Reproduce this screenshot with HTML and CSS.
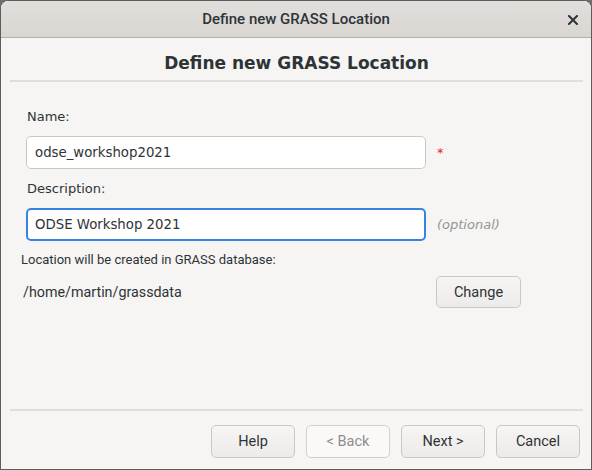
FILE: index.html
```html
<!DOCTYPE html>
<html>
<head>
<meta charset="utf-8">
<link rel="stylesheet" href="styles.css">
</head>
<body>
<div class="window">
  <div class="titlebar">
    <span class="title">Define new GRASS Location</span>
    <span class="close">
      <svg width="10" height="10" viewBox="0 0 10 10"><path d="M1 1L9 9M9 1L1 9" stroke="#2e3436" stroke-width="2" stroke-linecap="square"/></svg>
    </span>
  </div>
  <div class="content">
    <h1 class="heading">Define new GRASS Location</h1>
    <div class="sep"></div>
    <div class="form">
      <div class="label">Name:</div>
      <div class="row">
        <div class="input">odse_workshop2021</div>
        <span class="required">*</span>
      </div>
      <div class="label label2">Description:</div>
      <div class="row">
        <div class="input focused">ODSE Workshop 2021</div>
        <span class="optional">(optional)</span>
      </div>
      <div class="dbinfo">Location will be created in GRASS database:</div>
      <div class="dbrow">
        <span class="dbpath">/home/martin/grassdata</span>
        <button class="btn change">Change</button>
      </div>
    </div>
    <div class="sep bottom"></div>
    <div class="buttons">
      <button class="btn">Help</button>
      <button class="btn disabled">&lt; Back</button>
      <button class="btn">Next &gt;</button>
      <button class="btn">Cancel</button>
    </div>
  </div>
</div>
</body>
</html>
```

FILE: styles.css
```css
html, body {
  margin: 0;
  padding: 0;
  background: #6e6e6e;
}
body {
  width: 592px;
  height: 470px;
  overflow: hidden;
  font-family: "DejaVu Sans", sans-serif;
  color: #2e3436;
}
.window {
  box-sizing: border-box;
  width: 592px;
  height: 470px;
  border: 1px solid #5c5c5c;
  border-radius: 8px 8px 0 0;
  background: #f6f5f4;
  display: flex;
  flex-direction: column;
  overflow: hidden;
}
.titlebar {
  height: 36px;
  flex: none;
  background: linear-gradient(#e1dedb, #dad6d2);
  border-bottom: 1px solid #b6b0aa;
  display: flex;
  align-items: center;
  justify-content: center;
  position: relative;
  font-family: Roboto, sans-serif;
  font-size: 15px;
  font-weight: 500;
}
.close {
  position: absolute;
  right: 13px;
  top: 14px;
  width: 10px;
  height: 10px;
  display: flex;
}
.content {
  flex: 1;
  display: flex;
  flex-direction: column;
  padding: 0 8px 0 9px;
}
.heading {
  margin: 13px 0 0;
  text-align: center;
  font-size: 17px;
  font-weight: bold;
  line-height: 24px;
}
.sep {
  height: 2px;
  background: #e0dedb;
  margin-top: 5px;
}
.form {
  flex: 1;
  padding: 0 0 0 16px;
}
.label {
  font-size: 13px;
  margin-top: 27px;
  line-height: 16px;
  padding-left: 1px;
}
.label2 {
  margin-top: 12px;
}
.row {
  display: flex;
  align-items: center;
  margin-top: 11px;
}
.input {
  box-sizing: border-box;
  width: 400px;
  height: 33px;
  border: 1px solid #cdc7c2;
  border-radius: 5px;
  background: #fff;
  font-size: 13.3px;
  padding: 0 8px;
  display: flex;
  align-items: center;
}
.input.focused {
  border: 2px solid #3584e4;
  padding: 0 7px;
}
.required {
  color: #ee2222;
  font-size: 13px;
  margin-left: 11px;
}
.optional {
  color: #929595;
  font-style: italic;
  font-size: 13px;
  margin-left: 11px;
}
.dbinfo {
  font-family: Roboto, sans-serif;
  font-size: 13px;
  margin-top: 11px;
  margin-left: -5px;
  line-height: 16px;
}
.dbrow {
  display: flex;
  align-items: center;
  margin-top: 8px;
  margin-left: -3px;
}
.dbpath {
  font-family: Roboto, sans-serif;
  font-size: 14.3px;
  width: 413px;
}
.btn {
  box-sizing: border-box;
  width: 84px;
  height: 33px;
  border: 1px solid #cdc7c2;
  border-radius: 5px;
  background: linear-gradient(#f6f5f4, #edebe9);
  font-family: Roboto, sans-serif;
  font-size: 14.5px;
  color: #2e3436;
  padding: 0;
}
.btn.change {
  width: 85px;
  height: 32px;
}
.btn.disabled {
  background: #faf9f8;
  color: #8b8e8f;
  border-color: #d5d0cc;
}
.sep.bottom {
  margin-top: 0;
}
.buttons {
  display: flex;
  justify-content: flex-end;
  gap: 11px;
  padding: 14px 3px 11px 0;
}
```
